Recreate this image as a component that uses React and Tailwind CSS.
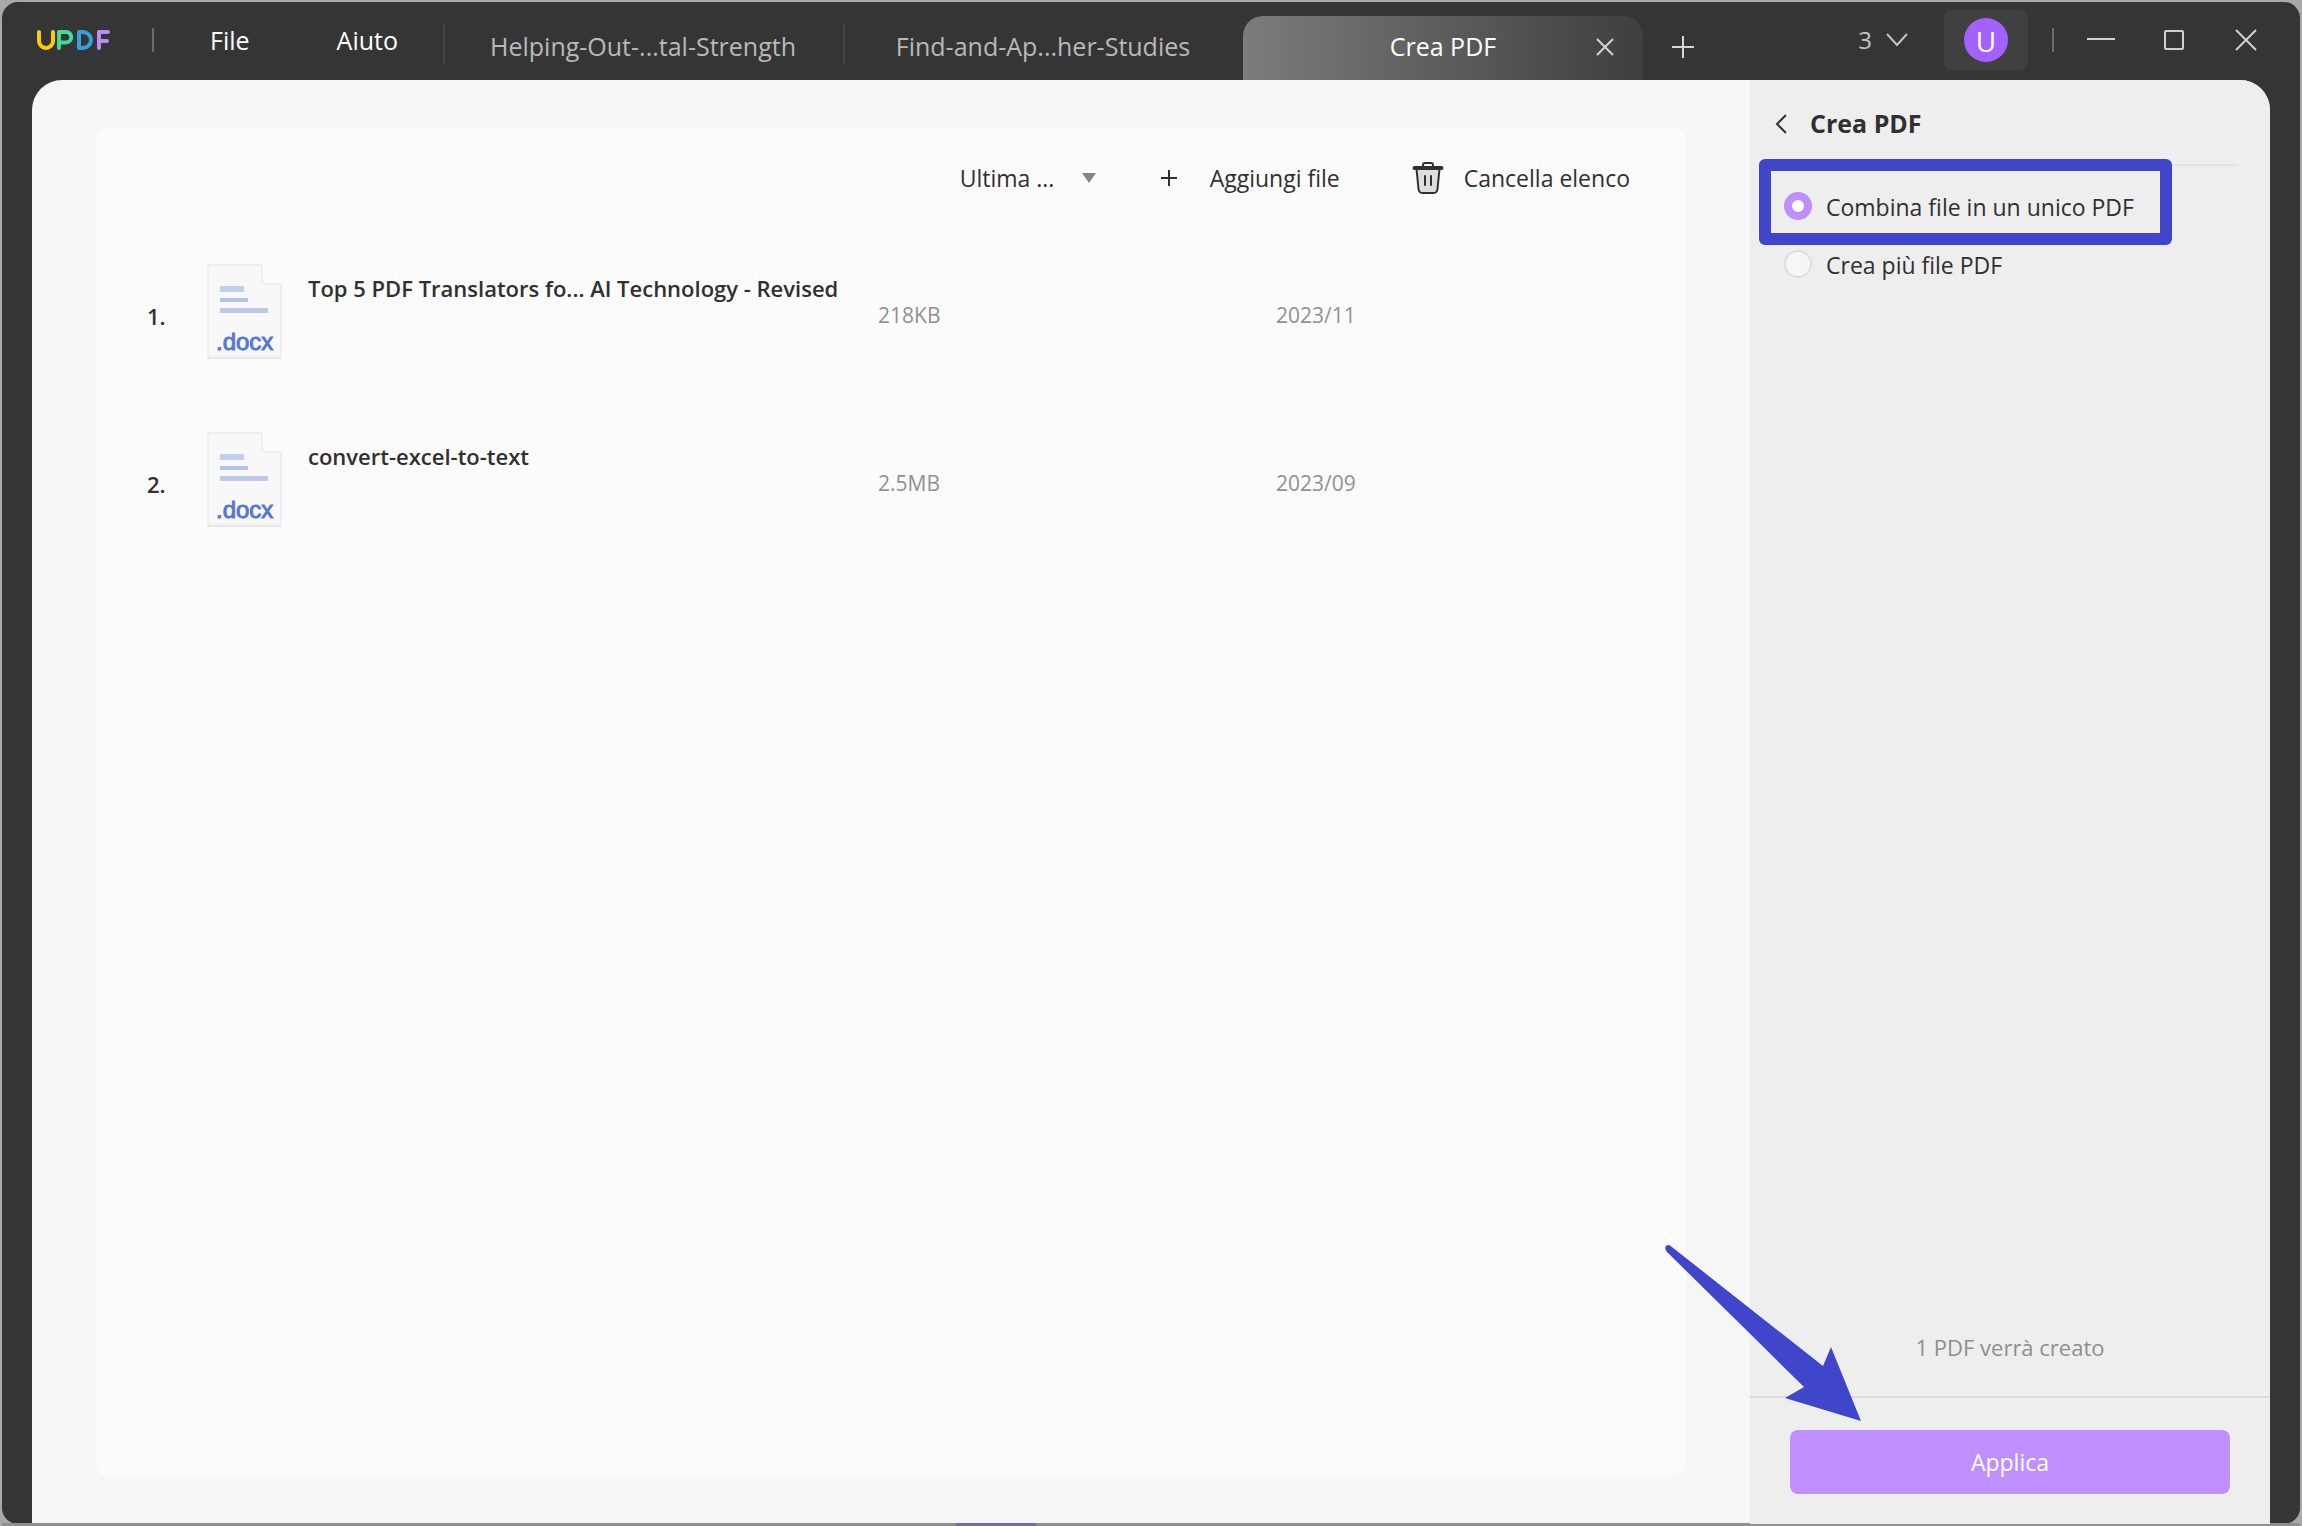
import React, { useState } from 'react';

const files = [
  { id: 1, name: 'Top 5 PDF Translators fo... AI Technology - Revised', size: '218KB', date: '2023/11' },
  { id: 2, name: 'convert-excel-to-text', size: '2.5MB', date: '2023/09' },
];

const tabs = ['Helping-Out-...tal-Strength', 'Find-and-Ap...her-Studies'];

const modes = [
  { id: 'combine', label: 'Combina file in un unico PDF' },
  { id: 'multiple', label: 'Crea più file PDF' },
];

const Logo = () => (
  <svg width="76" height="24" viewBox="0 0 76 24" fill="none" strokeWidth="4" strokeLinecap="round" strokeLinejoin="round" role="img" aria-label="UPDF">
    <path d="M5 4v9a7 7 0 0 0 14 0V4" stroke="#fdc90f" />
    <path d="M25 20V4h7a5.2 5.2 0 0 1 0 10.4h-5" stroke="#3fdc9b" />
    <path d="M45 4v16h4a8 8 0 0 0 0-16z" stroke="#359fe0" />
    <path d="M74 4H65v16M65 13h8" stroke="#bd8cfa" />
  </svg>
);

const DocxIcon = () => (
  <svg width="76" height="96" viewBox="0 0 76 96" role="img" aria-label="docx">
    <path d="M2 1h54v15q0 4 4 4h15v74H2z" fill="#e4e4e6" transform="translate(0 1)" />
    <path d="M2 1h54v15q0 4 4 4h15v73H2z" fill="#f8f8f9" stroke="#ececee" strokeWidth="1.5" />
    <rect x="14" y="22" width="24" height="6" fill="#c3cfee" />
    <rect x="14" y="34" width="28" height="4" fill="#b3c3ec" />
    <rect x="14" y="44" width="48" height="5" fill="#bdc9ea" />
    <text x="10" y="86" fill="#5577d2" stroke="#5577d2" strokeWidth="0.9" fontSize="24" fontFamily="Liberation Sans, sans-serif">.docx</text>
  </svg>
);

const TrashIcon = () => (
  <svg width="32" height="34" viewBox="0 0 32 34" fill="none" stroke="#303030" strokeWidth="2" strokeLinecap="round" strokeLinejoin="round" aria-hidden="true">
    <path d="M4.5 8l2 20q.5 4 4 4h11q3.500 0 4-4l2-20z" fill="#dedede" />
    <path d="M2.500 7h27" strokeWidth="4" />
    <path d="M11 5.500V4q0-2 2-2h6q2 0 2 2v1.500" />
    <path d="M13 15v9M19 15v9" />
  </svg>
);

const TitleBar = () => (
  <header className="flex h-20 shrink-0 items-start text-white">
    <div className="flex h-20 items-center pl-8">
      <Logo />
      <span className="ml-[42px] h-6 w-0.5 bg-[#6b6b6b]" />
    </div>
    <nav className="flex h-20 items-center gap-[87px] pl-14 pr-[45px] pt-0.5 text-[25px]">
      <button>File</button>
      <button>Aiuto</button>
    </nav>

    <div className="flex h-20 items-end">
      {tabs.map(tab => (
        <button
          key={tab}
          className="relative flex h-16 w-[400px] items-center justify-center pb-0.5 text-[25px] text-[#b9b9b9] before:absolute before:left-0 before:top-2 before:h-10 before:w-0.5 before:bg-[#454545]"
        >
          {tab}
        </button>
      ))}
      <div className="flex h-16 w-[400px] items-center justify-end rounded-t-[20px] bg-linear-to-r from-[#7c7c7c] to-[#3f3f3f] pb-0.5 pr-[28px]">
        <button className="flex-1 pl-12 text-center text-[25px]">Crea PDF</button>
        <button aria-label="Chiudi scheda">
          <svg width="20" height="20" viewBox="0 0 20 20" stroke="#d2d2d2" strokeWidth="2" aria-hidden="true">
            <path d="M2 2l16 16M18 2L2 18" />
          </svg>
        </button>
      </div>
      <button aria-label="Nuova scheda" className="flex h-16 items-center pb-0.5 pl-7">
        <svg width="24" height="24" viewBox="0 0 24 24" stroke="#d8d8d8" strokeWidth="2" aria-hidden="true">
          <path d="M12 1v22M1 12h22" />
        </svg>
      </button>
    </div>

    <div className="ml-auto flex h-20 items-center pr-[42px]">
      <button className="flex items-center gap-3.5 text-2xl text-[#c4c4c4]">
        3
        <svg width="22" height="16" viewBox="0 0 22 16" fill="none" stroke="#c4c4c4" strokeWidth="2" aria-hidden="true">
          <path d="M1 2l10 11L21 2" />
        </svg>
      </button>
      <button className="ml-9 flex h-[60px] w-[84px] items-center justify-center rounded-lg bg-[#404040]" aria-label="Account">
        <span className="flex size-11 items-center justify-center rounded-full bg-[#a362ff] pt-0.5 text-[28px] leading-none">U</span>
      </button>
      <span className="ml-6 h-6 w-0.5 bg-[#6b6b6b]" />
      <div className="ml-8 flex items-center gap-12">
        <button aria-label="Riduci">
          <svg width="30" height="24" viewBox="0 0 30 24" stroke="#d2d2d2" strokeWidth="2" aria-hidden="true">
            <path d="M1 11h28" />
          </svg>
        </button>
        <button aria-label="Ingrandisci">
          <svg width="22" height="24" viewBox="0 0 22 24" fill="none" stroke="#d2d2d2" strokeWidth="2" aria-hidden="true">
            <rect x="1" y="3" width="18" height="18" rx="1" />
          </svg>
        </button>
        <button aria-label="Chiudi">
          <svg width="24" height="24" viewBox="0 0 24 24" stroke="#d2d2d2" strokeWidth="2" aria-hidden="true">
            <path d="M2 2l20 20M22 2L2 22" />
          </svg>
        </button>
      </div>
    </div>
  </header>
);

const FileList = () => (
  <main className="flex-1 px-16 pb-12 pt-12">
    <section className="h-full rounded-xl bg-[#fbfbfb] text-[#303030]">
      <div className="flex h-[100px] items-center justify-end pr-14 text-[23px]">
        <div className="relative flex items-center">
          <select aria-label="Ordina per" className="w-[136px] appearance-none bg-transparent outline-none">
            <option>Ultima ...</option>
          </select>
          <svg className="pointer-events-none absolute right-0" width="14" height="10" viewBox="0 0 14 10" fill="#858585" aria-hidden="true">
            <path d="M0 0h14L7 10z" />
          </svg>
        </div>
        <button className="ml-16 flex items-center gap-8">
          <svg width="18" height="18" viewBox="0 0 18 18" stroke="#303030" strokeWidth="2" aria-hidden="true">
            <path d="M9 1v16M1 9h16" />
          </svg>
          Aggiungi file
        </button>
        <button className="ml-[72px] flex items-center gap-5">
          <TrashIcon />
          Cancella elenco
        </button>
      </div>

      <table className="w-full table-fixed text-left">
        <colgroup>
          <col className="w-[110px]" />
          <col className="w-[102px]" />
          <col className="w-[570px]" />
          <col className="w-[398px]" />
          <col />
        </colgroup>
        <tbody>
          {files.map(file => (
            <tr key={file.id} className="h-[168px]">
              <td className="pl-[51px] pt-2 text-[22px] font-semibold">{file.id}.</td>
              <td><DocxIcon /></td>
              <td className="pb-12 text-[22px] font-semibold">{file.name}</td>
              <td className="pt-2 text-[21px] text-[#919191]">{file.size}</td>
              <td className="pt-2 text-[21px] text-[#919191]">{file.date}</td>
            </tr>
          ))}
        </tbody>
      </table>
    </section>
  </main>
);

const CreatePanel = () => {
  const [mode, setMode] = useState('combine');

  return (
    <aside className="relative flex w-[520px] shrink-0 flex-col bg-[#eeeeee] text-[#303030]">
      <div className="ml-2 mr-8 flex h-[86px] items-center gap-[22px] border-b-2 border-[#e3e3e3] pl-4 pt-[3px] text-[25px] font-bold">
        <button aria-label="Indietro">
          <svg width="14" height="22" viewBox="0 0 14 22" fill="none" stroke="#303030" strokeWidth="2" aria-hidden="true">
            <path d="M12 2L3 11l9 9" />
          </svg>
        </button>
        <h1>Crea PDF</h1>
      </div>

      <fieldset className="flex flex-col pl-[34px] pt-[11px]">
        {modes.map(item => (
          <div key={item.id} className="relative flex h-[58px] items-center gap-3.5 text-[23px]">
            <input
              type="radio"
              id={item.id}
              name="mode"
              checked={mode === item.id}
              onChange={() => setMode(item.id)}
              className="size-7 appearance-none rounded-full border-2 border-[#dedede] bg-[#f6f6f6] checked:border-8 checked:border-[#bf8ffb] checked:bg-white"
            />
            <label htmlFor={item.id} className="pt-0.5">{item.label}</label>
            {item.id === 'combine' && (
              <span className="pointer-events-none absolute -left-[25px] -top-[18px] h-[86px] w-[413px] rounded-md border-12 border-[#4046cc]" />
            )}
          </div>
        ))}
      </fieldset>

      <p className="mt-auto pb-8 text-center text-[22px] text-[#8f8f8f]">1 PDF verrà creato</p>
      <div className="border-t-2 border-[#dcdcdc] px-10 pb-[30px] pt-8">
        <button className="h-16 w-full rounded-lg bg-[#bf8fff] text-[23px] text-white">Applica</button>
      </div>

      {/* arrow pointing at the apply button */}
      <svg className="pointer-events-none absolute bottom-[101px] -left-[86px]" width="200" height="180" viewBox="0 0 200 180" fill="#4046cc" aria-hidden="true">
        <path d="M6 2.500Q3 1 1.500 3.500Q.8 6 2.500 8.500L140 144L121 155L197 178L167 104L159 123Z" />
      </svg>
    </aside>
  );
};

const App = () => (
  <div className="flex h-screen flex-col bg-[#a9a9ac] px-0.5 pt-0.5 font-['Open_Sans',sans-serif]">
    <div className="-mb-px flex min-h-0 flex-1 flex-col overflow-hidden rounded-2xl bg-[#353535]">
      <div className="-mt-0.5 flex min-h-0 flex-1 flex-col">
        <TitleBar />
        <div className="mx-[30px] flex min-h-0 flex-1 overflow-hidden rounded-t-[30px] bg-[#f6f6f6]">
          <FileList />
          <CreatePanel />
        </div>
      </div>
    </div>
    <div className="flex h-[3px] shrink-0 bg-[#909090]">
      <span className="ml-[954px] w-20 bg-[#75709a]" />
    </div>
  </div>
);

export default App;
